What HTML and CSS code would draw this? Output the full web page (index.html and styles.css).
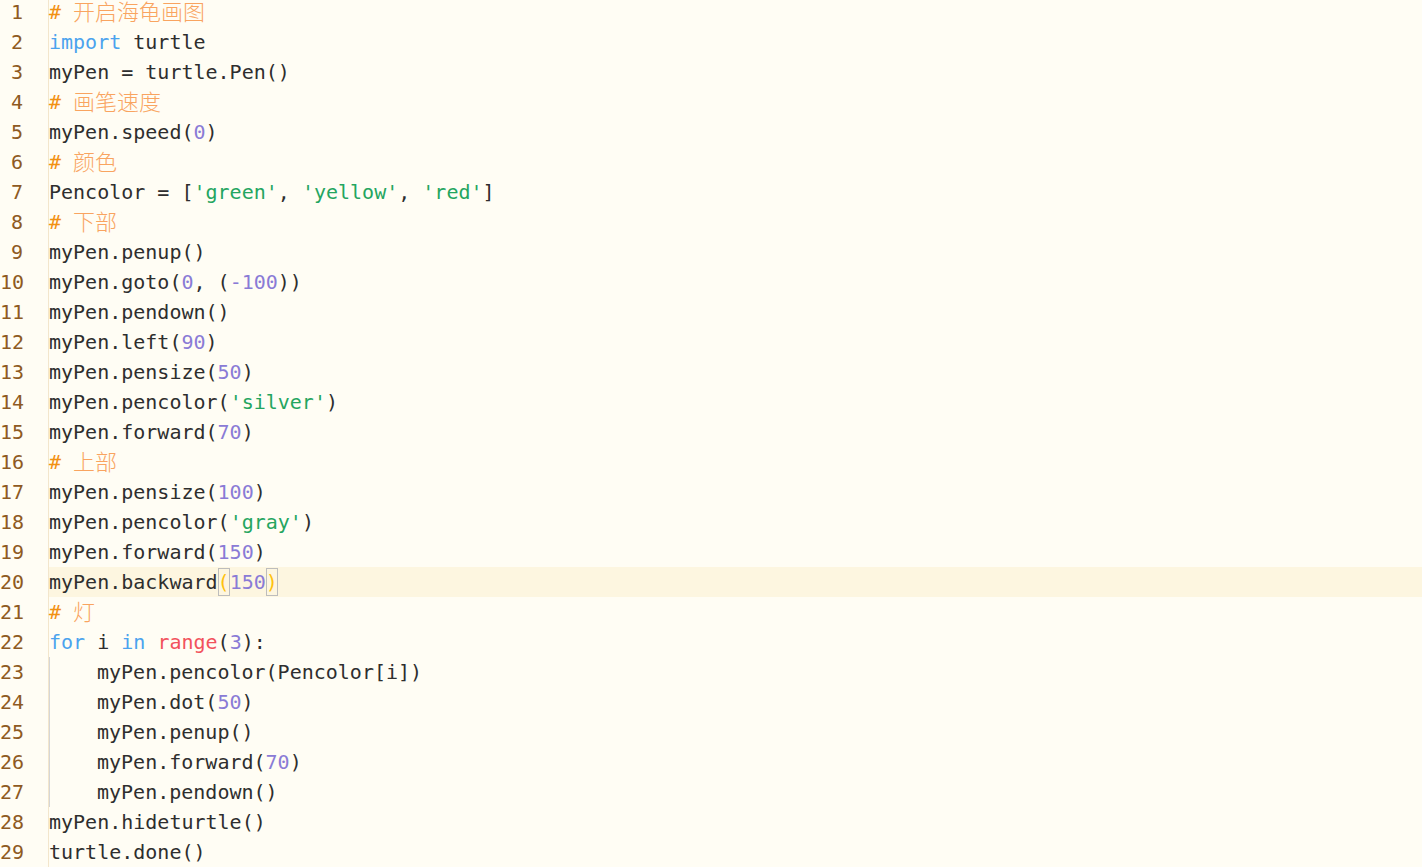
FILE: index.html
```html
<!DOCTYPE html>
<html lang="zh">
<head>
<meta charset="utf-8">
<title>turtle</title>
<link rel="stylesheet" href="styles.css">
</head>
<body>
<div class="editor">
  <div class="gutter">
    <div class="ln">1</div><div class="ln">2</div><div class="ln">3</div><div class="ln">4</div><div class="ln">5</div>
    <div class="ln">6</div><div class="ln">7</div><div class="ln">8</div><div class="ln">9</div><div class="ln">10</div>
    <div class="ln">11</div><div class="ln">12</div><div class="ln">13</div><div class="ln">14</div><div class="ln">15</div>
    <div class="ln">16</div><div class="ln">17</div><div class="ln">18</div><div class="ln">19</div><div class="ln">20</div>
    <div class="ln">21</div><div class="ln">22</div><div class="ln">23</div><div class="ln">24</div><div class="ln">25</div>
    <div class="ln">26</div><div class="ln">27</div><div class="ln">28</div><div class="ln">29</div>
  </div>
  <div class="code">
    <div class="line"><span class="hash">#</span> <span class="cm">开启海龟画图</span></div>
    <div class="line"><span class="kw">import</span> turtle</div>
    <div class="line">myPen = turtle.Pen()</div>
    <div class="line"><span class="hash">#</span> <span class="cm">画笔速度</span></div>
    <div class="line">myPen.speed(<span class="num">0</span>)</div>
    <div class="line"><span class="hash">#</span> <span class="cm">颜色</span></div>
    <div class="line">Pencolor = [<span class="str">'green'</span>, <span class="str">'yellow'</span>, <span class="str">'red'</span>]</div>
    <div class="line"><span class="hash">#</span> <span class="cm">下部</span></div>
    <div class="line">myPen.penup()</div>
    <div class="line">myPen.goto(<span class="num">0</span>, (<span class="num">-100</span>))</div>
    <div class="line">myPen.pendown()</div>
    <div class="line">myPen.left(<span class="num">90</span>)</div>
    <div class="line">myPen.pensize(<span class="num">50</span>)</div>
    <div class="line">myPen.pencolor(<span class="str">'silver'</span>)</div>
    <div class="line">myPen.forward(<span class="num">70</span>)</div>
    <div class="line"><span class="hash">#</span> <span class="cm">上部</span></div>
    <div class="line">myPen.pensize(<span class="num">100</span>)</div>
    <div class="line">myPen.pencolor(<span class="str">'gray'</span>)</div>
    <div class="line">myPen.forward(<span class="num">150</span>)</div>
    <div class="line active">myPen.backward<span class="match">(</span><span class="num">150</span><span class="match">)</span></div>
    <div class="line"><span class="hash">#</span> <span class="cm">灯</span></div>
    <div class="line"><span class="kw">for</span> i <span class="kw">in</span> <span class="fn">range</span>(<span class="num">3</span>):</div>
    <div class="line"><span class="indent"></span>myPen.pencolor(Pencolor[i])</div>
    <div class="line"><span class="indent"></span>myPen.dot(<span class="num">50</span>)</div>
    <div class="line"><span class="indent"></span>myPen.penup()</div>
    <div class="line"><span class="indent"></span>myPen.forward(<span class="num">70</span>)</div>
    <div class="line"><span class="indent"></span>myPen.pendown()</div>
    <div class="line">myPen.hideturtle()</div>
    <div class="line">turtle.done()</div>
  </div>
</div>
</body>
</html>
```

FILE: styles.css
```css
html, body {
  margin: 0;
  padding: 0;
  background: #fffdf4;
  overflow: hidden;
}

.editor {
  display: flex;
  margin-top: -3px;
  font-family: "DejaVu Sans Mono", "Liberation Mono", "Noto Sans CJK SC", monospace;
  font-size: 20px;
  color: #2e2e2e;
}

.gutter {
  width: 48px;
  flex: none;
  border-right: 1px solid #f3e6cc;
}

.ln {
  height: 30px;
  line-height: 30px;
  text-align: right;
  padding-right: 25px;
  color: #8e5a22;
}

.code {
  flex: 1;
}

.line {
  height: 30px;
  line-height: 30px;
  white-space: pre;
}

.line.active {
  background: #fdf6e0;
}

.hash {
  color: #f29112;
}

.cm {
  color: #f9a460;
  font-family: "Noto Sans CJK SC", sans-serif;
  font-size: 22px;
  font-weight: 300;
  line-height: 10px;
  position: relative;
  top: 1px;
}

.kw {
  color: #4ba3ee;
}

.fn {
  color: #f2525c;
}

.str {
  color: #24a560;
}

.num {
  color: #8a7bd6;
}

.match {
  display: inline-block;
  height: 28px;
  line-height: 28px;
  margin-top: 1px;
  vertical-align: top;
  color: #ffc20e;
  outline: 1px solid #bdbdbd;
  outline-offset: -1px;
}

.indent {
  display: inline-block;
  width: 48px;
  height: 30px;
  vertical-align: top;
  box-sizing: border-box;
  border-left: 1px solid #d6d6d6;
}
```
